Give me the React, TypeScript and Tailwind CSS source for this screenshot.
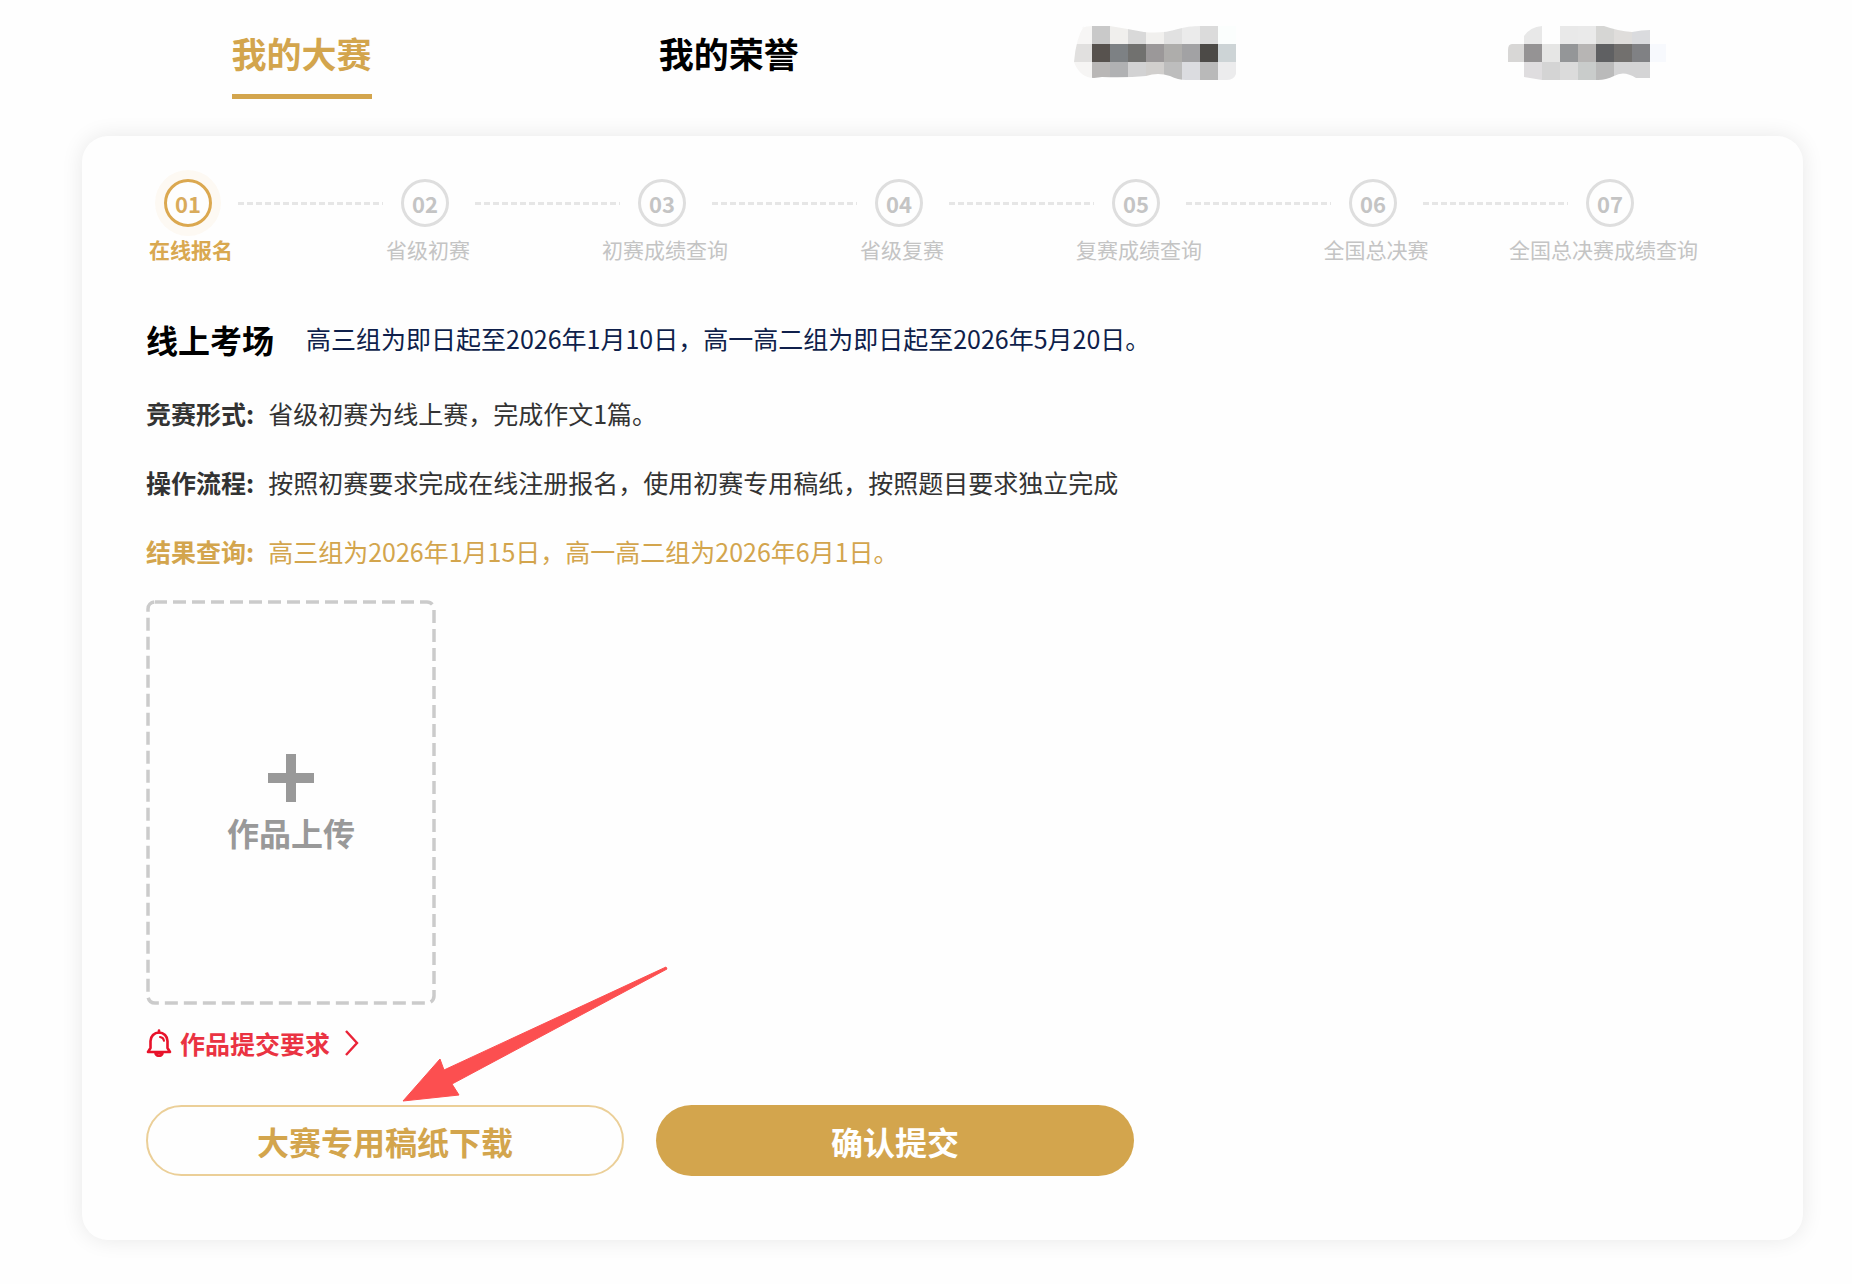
import { useState } from "react";

const steps = [
  { no: "01", label: "在线报名" },
  { no: "02", label: "省级初赛" },
  { no: "03", label: "初赛成绩查询" },
  { no: "04", label: "省级复赛" },
  { no: "05", label: "复赛成绩查询" },
  { no: "06", label: "全国总决赛" },
  { no: "07", label: "全国总决赛成绩查询" },
];

const infos = [
  { title: "竞赛形式:", text: "省级初赛为线上赛，完成作文1篇。", gold: false },
  { title: "操作流程:", text: "按照初赛要求完成在线注册报名，使用初赛专用稿纸，按照题目要求独立完成", gold: false },
  { title: "结果查询:", text: "高三组为2026年1月15日，高一高二组为2026年6月1日。", gold: true },
];

// colour blocks of the hidden tabs, one array per row
const mosaicA = [
  ["#f7f6f5", "#c9c9c9", "#f0efed", "#d9d9d9", "#f1f0ee", "#e1e1e1", "#ebebeb", "#dbdbdb", "#fbfefd"],
  ["#e1e0df", "#57524e", "#7d8184", "#71716f", "#9b9899", "#aeadab", "#a2a2a4", "#4c4a47", "#cdd4d6"],
  ["#f6f5f4", "#b9b7b6", "#b0b1b3", "#d2d2d3", "#d1cfcd", "#bdbdbd", "#dbdce0", "#b9b9b9", "#ececed"],
];
const mosaicB = [
  ["#fefefe", "#e8e8e8", "#fefefe", "#e9e9e9", "#eaeaea", "#d6d6d4", "#dfdddb", "#dadbde", "#fefefe"],
  ["#d8d7d6", "#959394", "#e6e6e5", "#949698", "#b7b5b4", "#5f6062", "#72706e", "#808184", "#f7f9fd"],
  ["#fefefe", "#dfdddf", "#d4d4d4", "#dbdbdb", "#c9cccb", "#bababa", "#d4d4d5", "#d4d4d5", "#fefefe"],
];

const Mosaic = ({ rows, shape, id, viewBox }: { rows: string[][]; shape: string; id: string; viewBox: string }) => (
  <svg width="168" height="54" viewBox={viewBox} aria-hidden="true">
    <clipPath id={id}>
      <path d={shape} />
    </clipPath>
    <g clipPath={`url(#${id})`} shapeRendering="crispEdges">
      {rows.map((row, y) =>
        row.map((color, x) => <rect key={`${x}-${y}`} x={x * 18 + 8} y={y * 18} width="18" height="18" fill={color} />)
      )}
    </g>
  </svg>
);

const Bell = () => (
  <svg width="26" height="28" viewBox="0 0 26 28" fill="none" stroke="#e8122a" strokeWidth="2.6" strokeLinecap="round" strokeLinejoin="round" aria-hidden="true">
    <path d="M13 1.5v2" />
    <path d="M4.5 19V12a8.5 8.5 0 0 1 17 0v7l2.5 4H2z" />
    <path d="M9.5 24a3.5 2.8 0 0 0 7 0z" />
    <path d="M14 8a4.5 4.5 0 0 1 4 3.8" strokeWidth="2" />
  </svg>
);

const App = () => {
  const [tab, setTab] = useState(0);
  const tabClass = (i: number) =>
    `border-b-5 pb-4 text-[35px] leading-[50px] font-bold ${tab === i ? "border-[#d3a54d] text-[#d3a54d]" : "border-transparent text-black"}`;

  return (
    <div className="min-h-screen bg-[#fefefe] pr-[49px] pb-11 pl-[82px] font-['Noto_Sans_CJK_SC',sans-serif]">
      <nav className="grid h-[136px] grid-cols-4 items-start justify-items-center px-1.5 pt-7">
        <button type="button" className={tabClass(0)} onClick={() => setTab(0)}>我的大赛</button>
        <button type="button" className={tabClass(1)} onClick={() => setTab(1)}>我的荣誉</button>
        <button type="button" className="-mt-0.5" aria-label="tab 3" onClick={() => setTab(2)}>
          <Mosaic
            id="m1"
            rows={mosaicA}
            viewBox="6 0 168 54"
            shape="M16 2Q20 0 26 0H44Q62 3 78 6Q96 8 112 3Q122 0 134 0H170V48Q168 54 160 54H120Q112 54 104 50Q92 46 80 50Q60 52 36 51L28 52Q14 52 8 36Q10 12 18 0Z"
          />
        </button>
        <button type="button" className="-mt-0.5" aria-label="tab 4" onClick={() => setTab(3)}>
          <Mosaic
            id="m2"
            rows={mosaicB}
            viewBox="1 0 168 54"
            shape="M26 10Q32 1 44 0H106Q120 5 134 6Q144 4 152 4V18H168V36H152V52H138Q126 44 116 50Q108 54 100 54H44L26 51V36H10V24Q10 18 14 18H26Z"
          />
        </button>
      </nav>

      <main className="relative rounded-[26px] bg-[#fefefe] pt-[43px] pr-[105px] pb-16 pl-16 shadow-[0_0_22px_rgba(0,0,0,0.09)]">
        <ol className="flex">
          {steps.map((step, i) => {
            const active = i === 0;
            const last = i === steps.length - 1;
            return (
              <li key={step.no} className={last ? "w-[130px] shrink-0" : "min-w-0 flex-1"}>
                <div className="flex items-center pl-[18px]">
                  <span
                    className={`flex size-12 shrink-0 items-center justify-center rounded-full border-3 text-[22px] font-bold ${
                      active ? "border-[#dba850] text-[#d9ab5c] shadow-[0_0_0_9px_#fdf9f3]" : "border-[#dedede] text-[#c4c4c4]"
                    }`}
                  >
                    {step.no}
                  </span>
                  {!last && (
                    <span className="ml-[26px] h-[3px] flex-1 bg-[repeating-linear-gradient(90deg,#e6e6e6_0_6px,transparent_6px_9px)]" />
                  )}
                </div>
                <div
                  className={`mt-1.5 flex text-[21px] leading-8 whitespace-nowrap ${last ? "justify-end" : "w-[90px] justify-center"} ${
                    active ? "font-bold text-[#d9a850]" : "text-[#c4c4c4]"
                  }`}
                >
                  {step.label}
                </div>
              </li>
            );
          })}
        </ol>

        <div className="mt-11 flex items-center gap-8">
          <h1 className="text-[32px] leading-[60px] font-bold text-black">线上考场</h1>
          <p className="text-[25px] text-[#0f1f4b]">高三组为即日起至2026年1月10日，高一高二组为即日起至2026年5月20日。</p>
        </div>

        <dl className="mt-2.5">
          {infos.map((info) => (
            <div key={info.title} className={`flex gap-3.5 text-[25px] leading-[69px] ${info.gold ? "text-[#d3a54d]" : "text-[#333]"}`}>
              <dt className="font-bold">{info.title}</dt>
              <dd>{info.text}</dd>
            </div>
          ))}
        </dl>

        <button type="button" className="relative mt-3.5 flex h-[405px] w-[290px] flex-col items-center justify-center gap-2.5 text-[#999]">
          <svg className="absolute inset-0" width="290" height="405" fill="none" aria-hidden="true">
            <rect x="2" y="2" width="286" height="401" rx="7" stroke="#cbcbcb" strokeWidth="3.5" strokeDasharray="13 6" strokeDashoffset="1" />
          </svg>
          <svg width="46" height="48" viewBox="0 0 46 48" fill="currentColor" aria-hidden="true">
            <path d="M18 0h10v19h18v10H28v19H18V29H0V19h18z" />
          </svg>
          <span className="text-[32px] leading-10 font-bold">作品上传</span>
        </button>

        <a href="#" className="mt-[18px] flex w-fit items-center text-[25px] leading-10 font-bold text-[#ea3342]">
          <Bell />
          <span className="ml-2">作品提交要求</span>
          <svg className="ml-3.5" width="16" height="26" viewBox="0 0 16 26" fill="none" stroke="#ea2337" strokeWidth="2.4" aria-hidden="true">
            <path d="M2 1l11 12L2 25" />
          </svg>
        </a>

        <div className="mt-[42px] flex gap-8 text-[32px] font-bold">
          <button type="button" className="h-[71px] w-[478px] rounded-full border-2 border-[#ebcf98] text-[#d3a54d]">大赛专用稿纸下载</button>
          <button type="button" className="h-[71px] w-[478px] rounded-full bg-[#d3a54d] text-white">确认提交</button>
        </div>

        {/* pointer to the download button */}
        <svg className="pointer-events-none absolute top-[830px] left-[320px]" width="266" height="136" viewBox="0 0 266 136" aria-hidden="true">
          <path d="M1 135 38 93 42 104 264 1 265 3 50 118 57 129Z" fill="#fc4f50" stroke="#fc4f50" strokeLinejoin="round" />
        </svg>
      </main>
    </div>
  );
};

export default App;
